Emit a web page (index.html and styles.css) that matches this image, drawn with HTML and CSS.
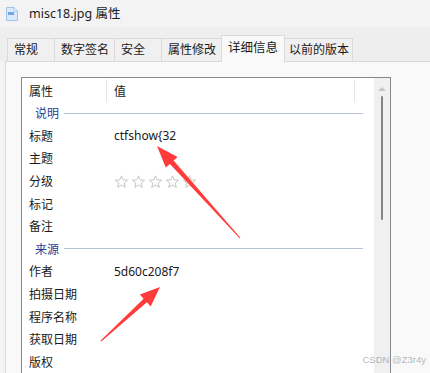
FILE: index.html
```html
<!DOCTYPE html>
<html lang="zh-CN">
  <head>
    <meta charset="UTF-8" />
    <title>misc18.jpg 属性</title>
    <link rel="stylesheet" href="styles.css">
  </head>
  <body>
    <div class="titlebar">
      <svg class="file-icon" width="12" height="14" viewBox="0 0 12 14">
        <path d="M0.5 0.5 H8 L11.5 4 V13.5 H0.5 Z" fill="#dbe9f8" stroke="#9fc3ea"/>
        <path d="M8 0.5 V4 H11.5" fill="#eef5fc" stroke="#9fc3ea"/>
        <rect x="2" y="5" width="6" height="3" fill="#6ea7e2"/>
      </svg>
      <span class="title">misc18.jpg 属性</span>
    </div>

    <div class="tabs">
      <div class="tab tab-s">常规</div>
      <div class="tab tab-m">数字签名</div>
      <div class="tab tab-s">安全</div>
      <div class="tab tab-m">属性修改</div>
      <div class="tab active">详细信息</div>
      <div class="tab tab-l">以前的版本</div>
    </div>

    <div class="panel">
      <div class="listbox">
        <div class="list">
          <div class="head">
            <div class="hcell c1">属性</div>
            <div class="hcell c2">值</div>
            <div class="hcell c3"></div>
          </div>

          <div class="group"><span>说明</span><i></i></div>
          <div class="row"><span class="key">标题</span><span class="val">ctfshow{32</span></div>
          <div class="row"><span class="key">主题</span></div>
          <div class="row">
            <span class="key">分级</span>
            <svg class="stars" width="84" height="14" viewBox="0 0 84 14">
              <defs>
                <polygon id="star" points="6.5,0.8 8.2,4.9 12.6,5.2 9.2,8 10.3,12.4 6.5,10 2.7,12.4 3.8,8 0.4,5.2 4.8,4.9" fill="none" stroke="#c6c6c6" stroke-width="1"/>
              </defs>
              <use href="#star" x="0"/>
              <use href="#star" x="17"/>
              <use href="#star" x="34"/>
              <use href="#star" x="51"/>
              <use href="#star" x="68"/>
            </svg>
          </div>
          <div class="row"><span class="key">标记</span></div>
          <div class="row"><span class="key">备注</span></div>

          <div class="group"><span>来源</span><i></i></div>
          <div class="row"><span class="key">作者</span><span class="val">5d60c208f7</span></div>
          <div class="row"><span class="key">拍摄日期</span></div>
          <div class="row"><span class="key">程序名称</span></div>
          <div class="row"><span class="key">获取日期</span></div>
          <div class="row"><span class="key">版权</span></div>
        </div>
        <div class="scrollbar">
          <div class="arrow-up"></div>
          <div class="thumb"></div>
        </div>
      </div>
    </div>

    <svg class="marks" width="430" height="373" viewBox="0 0 430 373">
      <polygon fill="#ff3b3b" points="157,146 177.6,157 173.6,160.6 240.4,237.7 239.6,238.3 169.9,164 165.8,167.6"/>
      <polygon fill="#ff3b3b" points="160,287 150.7,306.4 146.9,302.3 101.3,341.4 100.7,340.6 143.6,298.7 139.9,294.6"/>
    </svg>

    <div class="watermark">CSDN @Z3r4y</div>
  </body>
</html>
```

FILE: styles.css
```css
body {
  margin: 0;
  width: 430px;
  height: 373px;
  overflow: hidden;
  position: relative;
  background-color: #f3f3f3;
  font-family: "Noto Sans", "Noto Sans CJK SC", sans-serif;
  font-size: 12px;
  color: #1a1a1a;
}

.titlebar {
  height: 27px;
  display: flex;
  align-items: center;
  padding-left: 6px;
  gap: 11px;
}

.title {
  font-size: 12.5px;
  padding-bottom: 2px;
}

.tabs {
  height: 34px;
  background-color: #eeeeee;
  display: flex;
  align-items: flex-end;
  padding-left: 7px;
  position: relative;
  z-index: 1;
}

.tab {
  box-sizing: border-box;
  height: 23px;
  line-height: 21px;
  padding-left: 6px;
  background-color: #f0f0f0;
  border: 1px solid #dadada;
  border-bottom: none;
  margin-right: -1px;
  white-space: nowrap;
}

.tab-s {
  width: 48px;
}

.tab-m {
  width: 61px;
}

.tab-l {
  width: 69px;
  padding-left: 4px;
}

.tab.active {
  width: 64px;
  height: 27px;
  line-height: 24px;
  padding-left: 6px;
  background-color: #f9f9f9;
  margin-bottom: -1px;
  position: relative;
  font-size: 12.5px;
}

.panel {
  margin-left: 5px;
  background-color: #f9f9f9;
  border-top: 1px solid #dadada;
  border-left: 1px solid #dadada;
  padding: 15px 0 0 15px;
}

.listbox {
  width: 368px;
  height: 296px;
  border: 1px solid #828790;
  border-bottom: none;
  background-color: #ffffff;
  display: flex;
}

.list {
  flex: 1;
}

.head {
  height: 24px;
  display: flex;
}

.hcell {
  line-height: 25px;
  border-right: 1px solid #e5e5e5;
  margin: 1px 0 0;
  height: 23px;
}

.c1 {
  width: 77px;
  padding-left: 7px;
}

.c2 {
  width: 240px;
  padding-left: 7px;
}

.c3 {
  flex: 1;
  border-right: none;
}

.group {
  height: 22.6px;
  display: flex;
  align-items: center;
  padding: 0 11px 0 13px;
  color: #1f3d99;
  gap: 5px;
}

.group i {
  flex: 1;
  height: 1px;
  background-color: #b6c0d6;
}

.row {
  height: 22.6px;
  display: flex;
  align-items: center;
  padding-left: 7px;
}

.key {
  width: 85px;
}

.stars {
  margin-left: 1px;
  margin-top: 1px;
}

.scrollbar {
  width: 16px;
  background-color: #f0f0f0;
  display: flex;
  flex-direction: column;
  align-items: center;
}

.arrow-up {
  width: 0;
  height: 0;
  margin-top: 9px;
  border-left: 4px solid transparent;
  border-right: 4px solid transparent;
  border-bottom: 4px solid #c8c8c8;
}

.thumb {
  width: 2px;
  height: 124px;
  margin-top: 5px;
  background-color: #858585;
  border-radius: 1px;
}

.marks {
  position: absolute;
  left: 0;
  top: 0;
}

.watermark {
  position: absolute;
  right: 4px;
  top: 354px;
  white-space: nowrap;
  font-family: "Liberation Sans", sans-serif;
  font-size: 9.5px;
  color: rgba(150, 150, 150, 0.7);
}
```
